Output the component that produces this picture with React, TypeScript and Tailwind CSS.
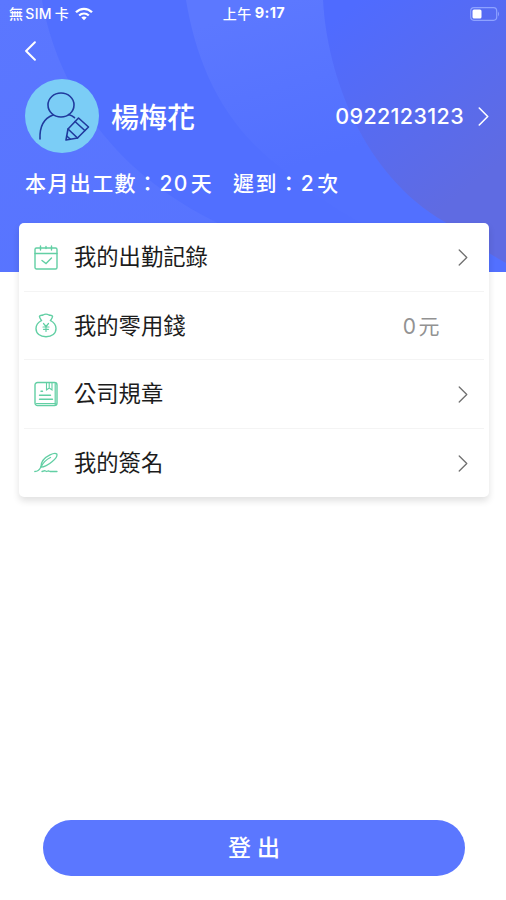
import { ReactNode } from 'react';
import clsx from 'clsx';

interface MenuItem {
  label: string;
  icon: ReactNode;
  value?: string;
}

function Chevron({ className }: { className?: string }) {
  return (
    <svg viewBox="0 0 10 18" fill="none" stroke="currentColor" strokeLinecap="round" strokeLinejoin="round" className={className}>
      <path d="M1 1l8 8-8 8" />
    </svg>
  );
}

function CalendarIcon() {
  return (
    <svg width="24" height="25" viewBox="0 0 24 25" fill="none" stroke="#62cfa4" strokeWidth="1.4" strokeLinecap="round">
      <rect x="1" y="3" width="22" height="21" rx="1.5" />
      <path d="M1 8.5h22M6.5 1v4M12 1.500v2M17.500 1v4" />
      <path d="M8 15.500l4 3 5.500-5.500" />
    </svg>
  );
}

function PurseIcon() {
  return (
    <svg width="24" height="25" viewBox="0 0 24 25" fill="none" stroke="#62cfa4" strokeWidth="1.4" strokeLinecap="round" strokeLinejoin="round">
      <path d="M7.500 7.500C6.500 6 5.300 4.500 5.500 3.300 6 1.700 8 2.500 9 2c1.500-.9 4.500-.9 6 0 1 .5 3-.3 3.500 1.300.2 1.200-1 2.700-2 4.200" />
      <path d="M7.500 7.500C4 9.300 2 12.200 2 15.500 2 20.500 6 23.800 12 23.800s10-3.300 10-8.300c0-3.300-2-6.200-5.500-8" />
      <path d="M9.500 10.500l2.500 3 2.500-3M12 13.500v5M9 14h6M9.500 16.300h5" strokeWidth="1.2" />
    </svg>
  );
}

function RulesIcon() {
  return (
    <svg width="24" height="26" viewBox="0 0 24 26" fill="none" stroke="#62cfa4" strokeWidth="1.4" strokeLinecap="round">
      <rect x="1" y="1.500" width="22" height="23" rx="2.500" />
      <path d="M21.200 2.500v21M2.500 22.500h19" strokeWidth="1.2" />
      <path d="M12.500 2v7l2.700-2 2.800 2V2M15.200 2v4" strokeWidth="1.100" />
      <path d="M7 10.300h1.500M5.500 14.300h11M5.500 18.300h13" />
    </svg>
  );
}

function QuillIcon() {
  return (
    <svg width="24" height="22" viewBox="0 0 24 22" fill="none" stroke="#62cfa4" strokeWidth="1.3" strokeLinecap="round" strokeLinejoin="round">
      <path d="M.8 19.500c3 0 4.500-1.500 6-4.300C9 11 12 7.500 16.500 5.500" />
      <path d="M7 14.500C7 9 11.500 5 16 2.800c3-1.400 5.800-1.800 6.800-.8.8 2-1.500 5-4.500 7.500-3.500 3-7 5.500-11.500 5.700z" />
      <path d="M8 19.500l3-.8 1.500.8 2-.6 1.500.6h7" />
    </svg>
  );
}

const MENU: MenuItem[] = [
  { label: '我的出勤記錄', icon: <CalendarIcon /> },
  { label: '我的零用錢', icon: <PurseIcon />, value: '0元' },
  { label: '公司規章', icon: <RulesIcon /> },
  { label: '我的簽名', icon: <QuillIcon /> },
];

function HeaderBackground() {
  return (
    <svg viewBox="0 0 506 272" preserveAspectRatio="none" className="absolute inset-0 h-full w-full">
      <defs>
        <linearGradient id="base" x1="0" y1="0" x2="1" y2="1">
          <stop offset="0" stopColor="#5b77ff" />
          <stop offset="1" stopColor="#5572ff" />
        </linearGradient>
        <linearGradient id="band" x1="0" y1="0" x2="0.35" y2="1">
          <stop offset="0.1" stopColor="#5c78ff" />
          <stop offset="0.65" stopColor="#5270ff" />
        </linearGradient>
        <linearGradient id="corner" x1="0.2" y1="0" x2="0.75" y2="1">
          <stop offset="0" stopColor="#4f6bff" />
          <stop offset="0.8" stopColor="#5f6be2" />
        </linearGradient>
      </defs>
      <rect width="506" height="272" fill="url(#base)" />
      <path d="M42 0C50 45 80 155 216 222L290 272H506V0z" fill="#516fff" />
      <path d="M186 0C196 60 220 120 276 164C330 210 400 250 480 272H506V0z" fill="url(#band)" />
      <path d="M323 0C327 75 363 175 445 222Q475 246 506 263V0z" fill="url(#corner)" />
    </svg>
  );
}

function StatusBar() {
  return (
    <div className="flex h-[27px] items-center justify-between pl-[9px] pr-[6px] text-[14px] font-medium leading-none">
      <div className="flex w-[160px] items-center">
        <span className="tracking-[0.3px]">無<span className="ml-[2px] mr-[3px] text-[14px]">SIM</span>卡</span>
        <svg width="18" height="14" viewBox="0 0 18 14" fill="none" stroke="white" className="ml-[6px]">
          <path d="M1 5.300C5.500.7 12.500.7 17 5.300" strokeWidth="2.300" />
          <path d="M4.200 8.500c2.700-2.700 6.900-2.700 9.600 0" strokeWidth="2.200" />
          <path d="M9 13.300L6.300 10.600c1.500-1.400 3.900-1.400 5.400 0z" fill="white" stroke="none" />
        </svg>
      </div>
      <div className="flex items-center gap-[3px] pr-[1px]">
        <span className="tracking-[0.4px]">上午</span> <span className="text-[14.5px] font-bold tracking-[0.4px]">9:17</span>
      </div>
      <div className="flex w-[160px] justify-end">
        <svg width="30" height="14" viewBox="0 0 30 14" fill="none">
          <rect x="0.700" y="0.700" width="26" height="12.600" rx="3.200" stroke="#8ea2ff" strokeWidth="1.200" />
          <rect x="2.500" y="2.500" width="9" height="9" rx="1.500" fill="white" />
          <path d="M28 4.500q2 2.500 0 5z" fill="#8ea2ff" />
        </svg>
      </div>
    </div>
  );
}

function Avatar() {
  return (
    <div className="flex h-[74px] w-[74px] items-center justify-center rounded-full bg-[#7bcdf6]">
      <svg width="74" height="74" viewBox="0 0 74 74" fill="none" stroke="#203a9d" strokeWidth="1.600" strokeLinecap="round" strokeLinejoin="round">
        <ellipse cx="36" cy="26" rx="13" ry="12" />
        <path d="M15 60C14.500 48 18.500 39.500 28 36M43.500 35.500c2.500.8 4.500 1.800 6 3.200" />
        <path d="M41 61l2-11L53.500 39l10 9L52.500 59z" />
        <path d="M43 50l9.500 9M50 42.500l9.800 9M41.700 57l3.500 3" />
      </svg>
    </div>
  );
}

export default function App() {
  return (
    <div className="flex h-[900px] w-full flex-col bg-white font-['Inter','Noto_Sans_CJK_TC',sans-serif]">
      <header className="relative h-[272px] shrink-0 text-white">
        <HeaderBackground />
        <div className="relative">
          <StatusBar />

          <button className="ml-[25px] mt-[14px] block h-[20px] w-[11px]">
            <Chevron className="h-[20px] w-[11px] rotate-180 stroke-[1.8]" />
          </button>

          {/* Profile */}
          <div className="mt-[18px] flex h-[74px] items-center pl-[25px] pr-[17px]">
            <Avatar />
            <h1 className="ml-[12px] pt-[3px] text-[28px] font-medium leading-none">楊梅花</h1>
            <span className="ml-auto pt-[2px] text-[21.5px] font-medium leading-none tracking-[0.35px]">0922123123</span>
            <Chevron className="ml-[14px] h-[19px] w-[11px] stroke-[1.5]" />
          </div>

          {/* Monthly stats */}
          <div className="mt-[16px] flex h-[28px] items-center pl-[25px] text-[21px] font-medium leading-none">
            <span className="w-[208px] whitespace-nowrap tracking-[1.4px]">本月出工數：20<span className="ml-[2px]">天</span></span>
            <span className="whitespace-nowrap tracking-[1.6px]">遲到：2<span className="ml-[2px]">次</span></span>
          </div>
        </div>
      </header>

      <main className="relative z-10 ml-[19px] mr-[17px] -mt-[49px] h-[274px] rounded-[5px] bg-white px-[5px] shadow-[0_4px_7px_rgba(0,0,0,0.12)]">
        {MENU.map((item, i) => (
          <div
            key={item.label}
            className={clsx('flex h-[68.5px] items-center pl-[10px] pt-px', i < MENU.length - 1 && 'border-b border-[#f4f4f4]')}
          >
            {item.icon}
            <span className="ml-[16px] text-[22.3px] leading-none text-[#1c1c1c]">{item.label}</span>
            {item.value ? (
              <span className="ml-auto mr-[42px] pt-px text-[21px] leading-none tracking-[2.5px] text-[#929292]">{item.value}</span>
            ) : (
              <Chevron className="ml-auto mr-[16px] h-[17px] w-[10px] stroke-[1.4] text-[#707070]" />
            )}
          </div>
        ))}
      </main>

      <button className="mb-[24px] ml-[43px] mr-[41px] mt-auto h-[56px] rounded-full bg-[#5b77ff] pt-px text-[23px] font-medium leading-none text-white">
        登 出
      </button>
    </div>
  );
}
